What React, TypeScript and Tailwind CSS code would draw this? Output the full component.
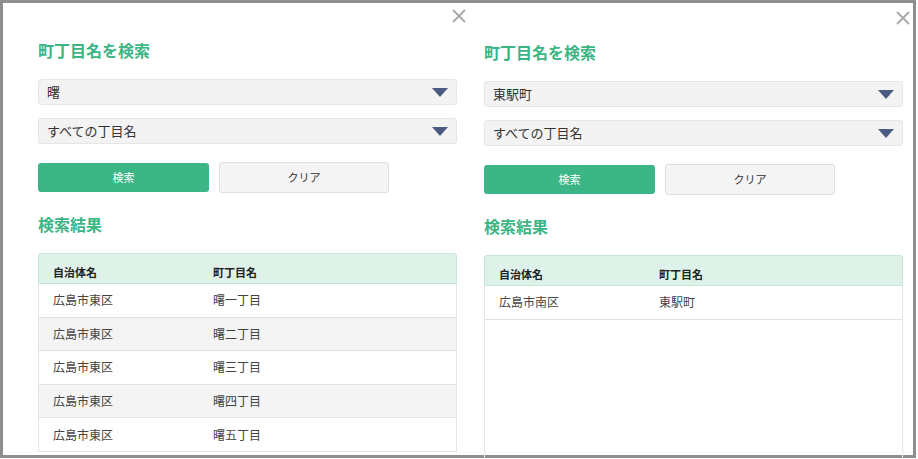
import React from "react";

const font = { fontFamily: '"Noto Sans CJK JP", "Noto Sans", sans-serif' };

function CloseX() {
  return (
    <svg width="14" height="14" viewBox="0 0 14 14">
      <path d="M1 1 L13 13 M13 1 L1 13" stroke="#a8a8a8" strokeWidth="1.8" />
    </svg>
  );
}

function Select({ value }: { value: string }) {
  return (
    <div className="flex h-[26px] items-center justify-between rounded-[3px] border border-[#e6e6e6] bg-[#f3f3f3] pl-[8px] pr-[8px]">
      <span className="text-[13px] text-[#333]">{value}</span>
      <svg width="16" height="9" viewBox="0 0 16 9">
        <path d="M0 0 H16 L8 9 Z" fill="#4c5b80" />
      </svg>
    </div>
  );
}

function Panel({
  city,
  rows,
  minRows,
}: {
  city: string;
  rows: [string, string][];
  minRows: boolean;
}) {
  return (
    <div className="flex w-[419px] flex-col">
      <h2 className="h-[24px] text-[16px] font-bold leading-[24px] text-[#3cb584]">町丁目名を検索</h2>
      <div className="mt-[17px] flex flex-col gap-[13px]">
        <Select value={city} />
        <Select value="すべての丁目名" />
      </div>
      <div className="mt-[18px] flex items-center gap-[10px]">
        <div className="flex h-[29px] w-[171px] items-center justify-center rounded-[3px] bg-[#3db687] text-[11px] text-white">
          検索
        </div>
        <div className="flex h-[31px] w-[170px] items-center justify-center rounded-[3px] border border-[#dedede] bg-[#f4f4f4] text-[11px] text-[#333]">
          クリア
        </div>
      </div>
      <h2 className="mt-[19px] h-[24px] text-[16px] font-bold leading-[24px] text-[#3cb584]">検索結果</h2>
      <div className="mt-[17px] flex h-[31px] items-end rounded-t-[3px] border border-[#c4e8d7] bg-[#dff2ea] pb-[3px] text-[11px] font-bold text-[#222]">
        <div className="w-[160px] pl-[14px] leading-[16px]">自治体名</div>
        <div className="pl-[14px] leading-[16px]">町丁目名</div>
      </div>
      <div className={"flex flex-col border-x border-[#e6e6e6] " + (minRows ? "h-[200px]" : "")}>
        {rows.map(([a, b], i) => (
          <div
            key={i}
            className={
              "flex h-[33.6px] items-center border-b border-[#e2e2e2] text-[12px] text-[#444] " +
              (i % 2 === 1 ? "bg-[#f4f4f4]" : "bg-white")
            }
          >
            <div className="w-[160px] pl-[14px]">{a}</div>
            <div className="pl-[14px]">{b}</div>
          </div>
        ))}
      </div>
    </div>
  );
}

export default function App() {
  return (
    <div className="h-[459px] w-[918px] overflow-hidden bg-white" style={font}>
      <div className="flex h-[458px] w-[916px] border-[3px] border-[#8e8e8e] bg-white">
        <div className="relative w-[459px] pl-[35px] pt-[35px]">
          <div className="absolute left-[449px] top-[6px]">
            <CloseX />
          </div>
          <Panel
            city="曙"
            minRows={false}
            rows={[
              ["広島市東区", "曙一丁目"],
              ["広島市東区", "曙二丁目"],
              ["広島市東区", "曙三丁目"],
              ["広島市東区", "曙四丁目"],
              ["広島市東区", "曙五丁目"],
            ]}
          />
        </div>
        <div className="relative flex-1 pl-[22px] pt-[37px]">
          <div className="absolute left-[434px] top-[8px]">
            <CloseX />
          </div>
          <Panel city="東駅町" minRows={true} rows={[["広島市南区", "東駅町"]]} />
        </div>
      </div>
    </div>
  );
}
